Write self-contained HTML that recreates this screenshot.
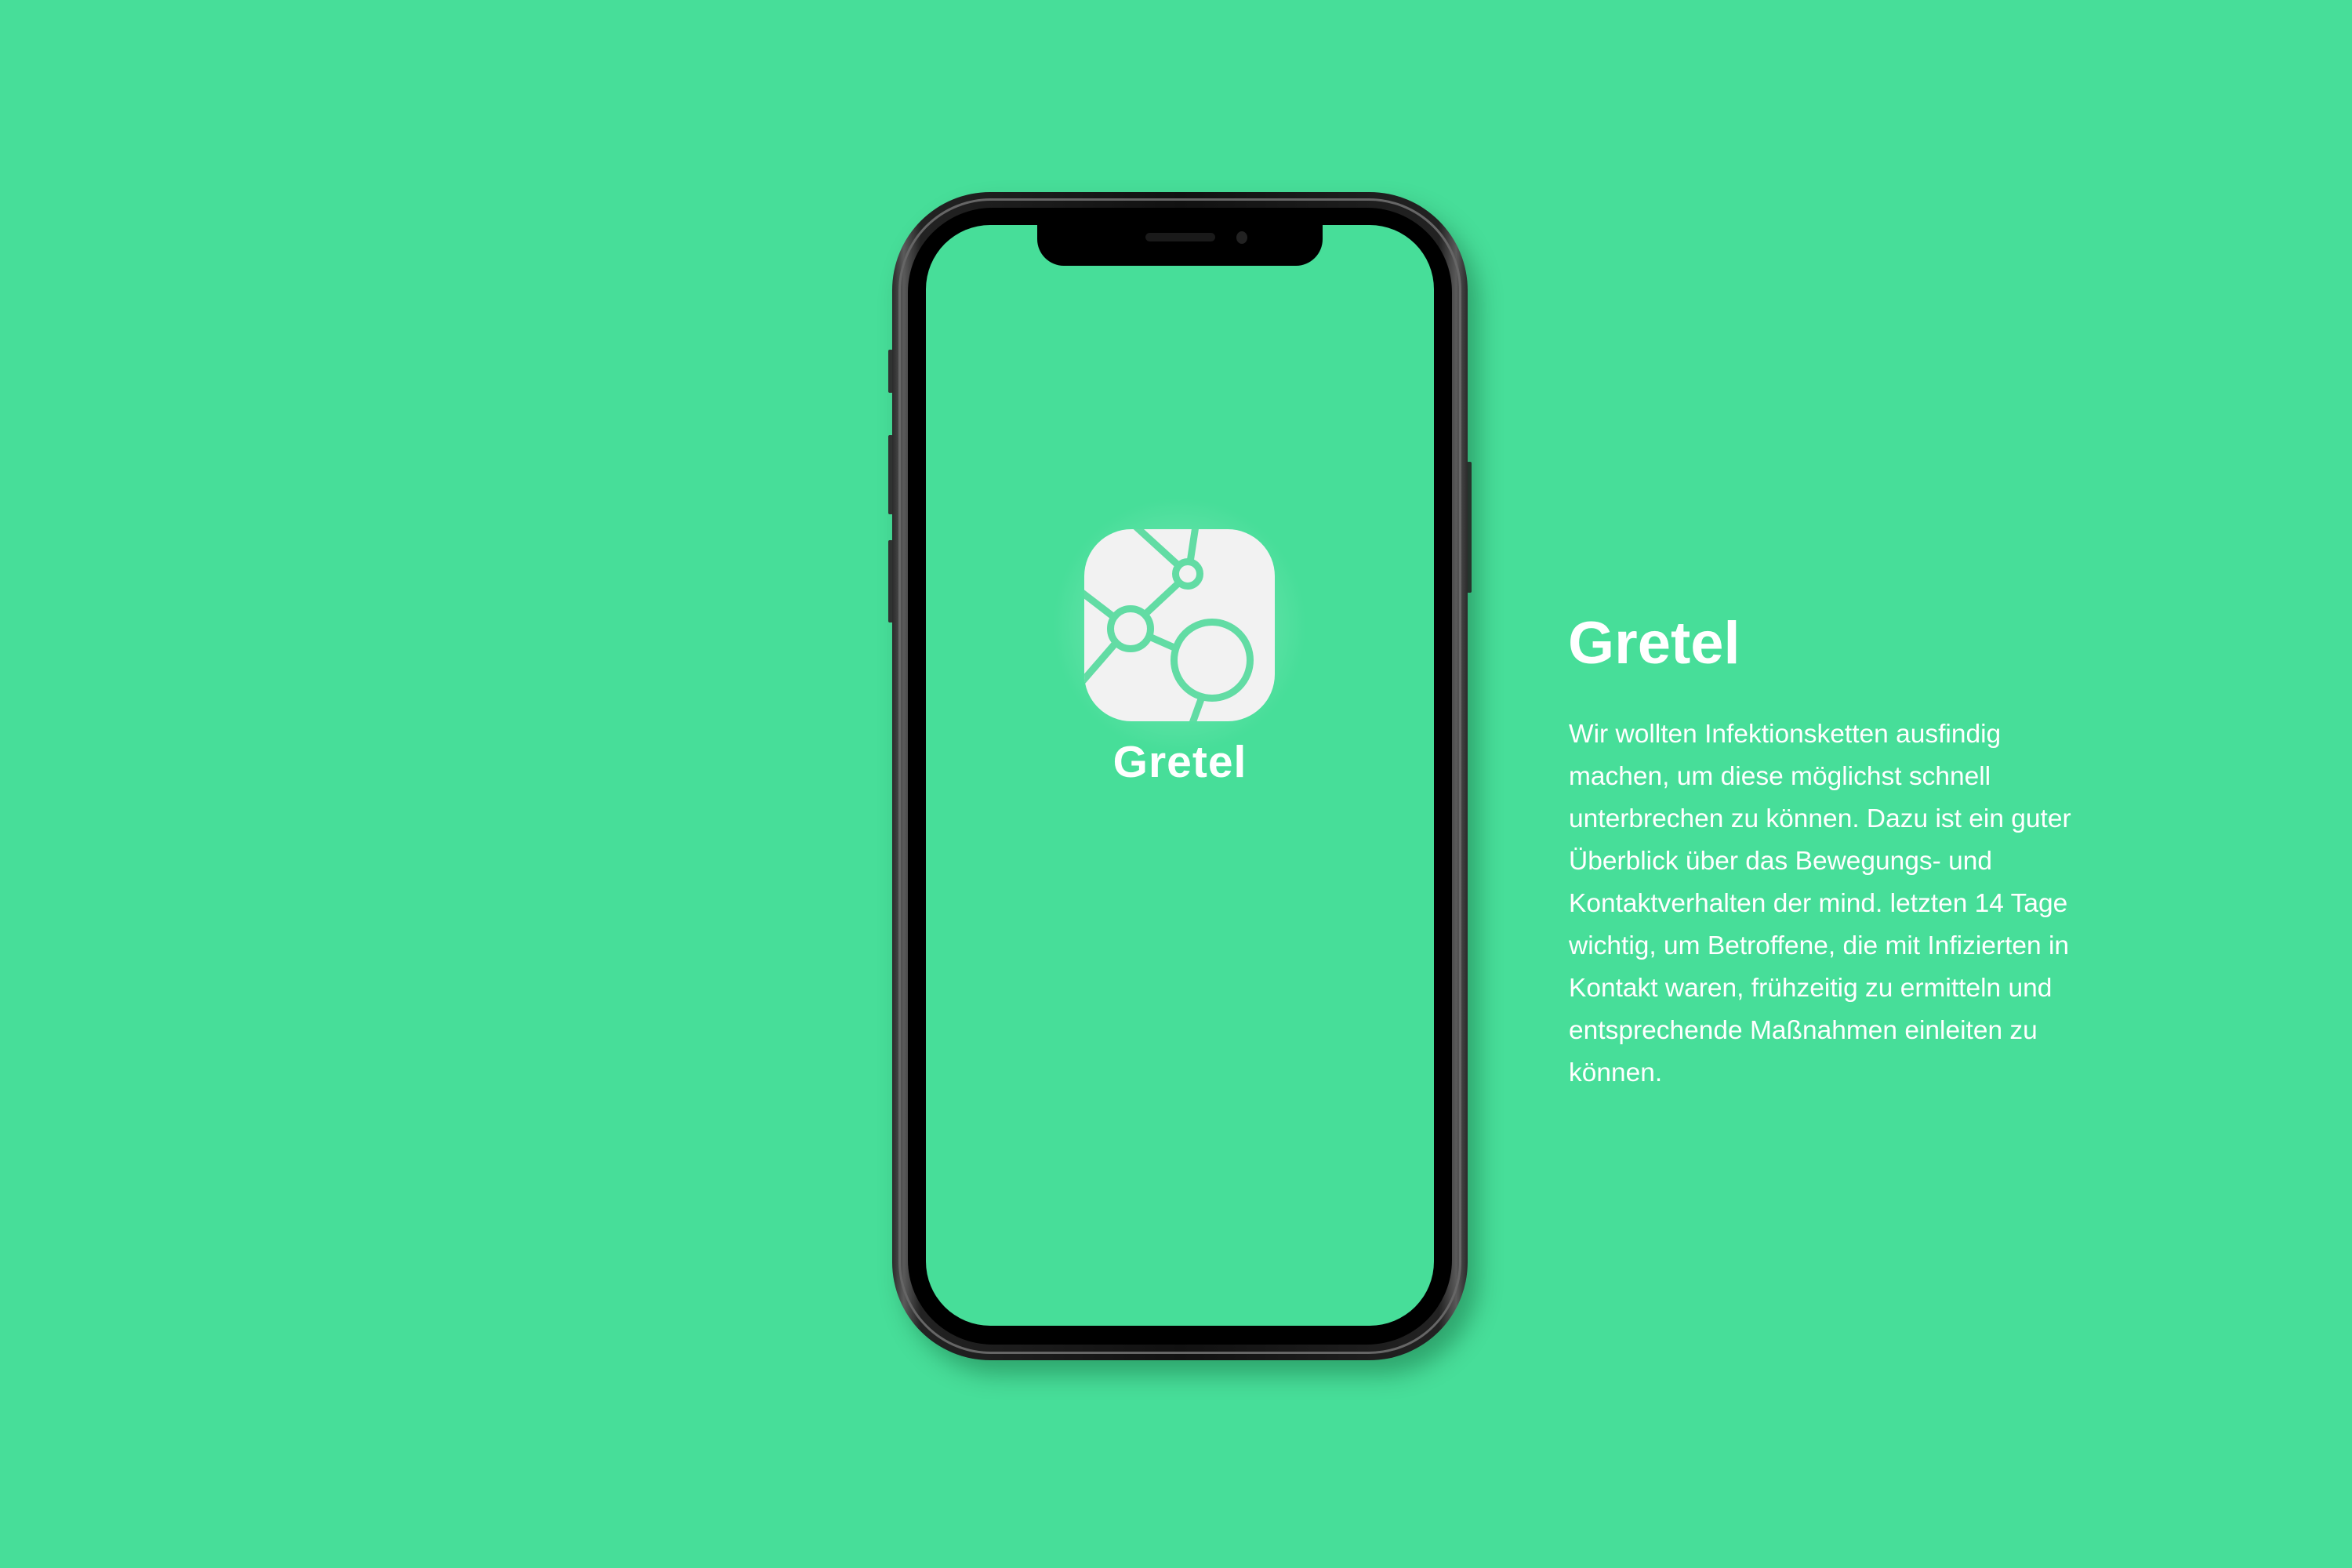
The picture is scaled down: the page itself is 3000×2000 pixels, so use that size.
<!DOCTYPE html>
<html><head><meta charset="utf-8"><style>
html,body{margin:0;padding:0}
body{width:3000px;height:2000px;background:#47de99;position:relative;overflow:hidden;font-family:"Liberation Sans","Noto Sans CJK JP",sans-serif}
.abs{position:absolute}
.phone{left:1138px;top:245px;width:734px;height:1490px;border-radius:125px;background:linear-gradient(90deg,#2a2a2a,#5a5a5a 2%,#222 5%,#111 50%,#222 95%,#5a5a5a 98%,#2a2a2a);box-shadow:14px 18px 30px rgba(0,60,30,0.35)}
.ring{left:1146px;top:253px;width:718px;height:1474px;border-radius:118px;border:3px solid #666;box-sizing:border-box}
.bezel{left:1158px;top:265px;width:694px;height:1450px;border-radius:108px;background:#000}
.screen{left:1181px;top:287px;width:648px;height:1404px;border-radius:82px;background:#47de99;overflow:hidden}
.notch{left:1323px;top:280px;width:364px;height:59px;background:#000;border-radius:0 0 34px 34px}
.btn{background:#333;width:6px;border-radius:2px}
</style></head><body>
<div class="abs btn" style="left:1133px;top:446px;height:55px"></div>
<div class="abs btn" style="left:1133px;top:555px;height:101px"></div>
<div class="abs btn" style="left:1133px;top:689px;height:105px"></div>
<div class="abs btn" style="left:1871px;top:589px;height:167px"></div>
<div class="abs phone"></div>
<div class="abs ring"></div>
<div class="abs bezel"></div>
<div class="abs screen"></div>
<div class="abs notch"></div>
<div class="abs" style="left:1461px;top:297px;width:89px;height:11px;border-radius:6px;background:#1a1a1a"></div>
<div class="abs" style="left:1577px;top:295px;width:14px;height:16px;border-radius:50%;background:#222"></div>

<div class="abs" style="left:1343px;top:635px;width:323px;height:325px;border-radius:100px;background:radial-gradient(closest-side,rgba(255,255,255,0.35),rgba(255,255,255,0))"></div>
<svg class="abs" style="left:1383px;top:675px" width="243" height="245" viewBox="0 0 243 245">
<defs><clipPath id="c"><rect width="243" height="245" rx="60"/></clipPath></defs>
<rect width="243" height="245" rx="60" fill="#f2f2f2"/>
<g clip-path="url(#c)" stroke="#62dca4" stroke-width="9" fill="none">
<line x1="65" y1="-4" x2="121" y2="47"/>
<line x1="142" y1="-4" x2="135" y2="42"/>
<line x1="121" y1="68" x2="77" y2="109"/>
<line x1="-4" y1="80" x2="39" y2="113"/>
<line x1="41" y1="144" x2="-4" y2="196"/>
<line x1="83" y1="137" x2="117" y2="152"/>
<line x1="150" y1="214" x2="137" y2="250"/>
<circle cx="132" cy="57" r="15.5"/>
<circle cx="59" cy="127" r="25.5"/>
<circle cx="163" cy="167" r="48.5"/>
</g></svg>
<div class="abs" style="left:1405px;top:937px;width:200px;text-align:center;color:#fff;font-weight:bold;font-size:57px;line-height:70px;letter-spacing:1px">Gretel</div>

<div class="abs" style="left:2000px;top:776px;color:#fff;font-weight:bold;font-size:76px;line-height:90px">Gretel</div>
<div class="abs" style="left:2001px;top:910px;color:#fff;font-size:33.5px;line-height:54px;white-space:nowrap">Wir wollten Infektionsketten ausfindig<br>machen, um diese möglichst schnell<br>unterbrechen zu können. Dazu ist ein guter<br>Überblick über das Bewegungs- und<br>Kontaktverhalten der mind. letzten 14 Tage<br>wichtig, um Betroffene, die mit Infizierten in<br>Kontakt waren, frühzeitig zu ermitteln und<br>entsprechende Maßnahmen einleiten zu<br>können.</div>
</body></html>
